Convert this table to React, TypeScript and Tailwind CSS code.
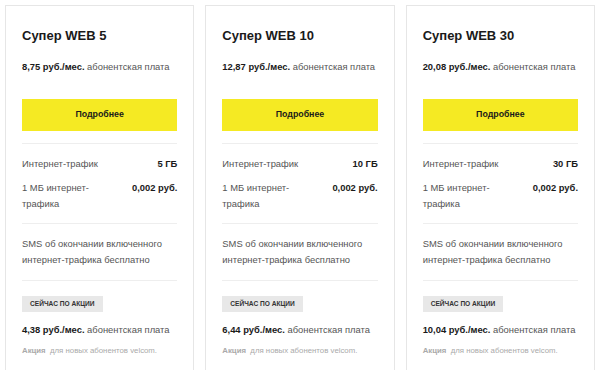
const plans = [
  { name: "Супер WEB 5", price: "8,75", traffic: "5 ГБ", promo: "4,38" },
  { name: "Супер WEB 10", price: "12,87", traffic: "10 ГБ", promo: "6,44" },
  { name: "Супер WEB 30", price: "20,08", traffic: "30 ГБ", promo: "10,04" },
];

function PlanCard({ name, price, traffic, promo }: { name: string; price: string; traffic: string; promo: string }) {
  return (
    <div className="h-[380px] border border-[#e6e6e6] bg-white px-4 pt-[22px]">
      <div className="text-[13px] font-bold leading-4 text-[#1a1a1a]">{name}</div>
      <div className="mt-[17px] text-[9.4px] leading-3 text-[#555]">
        <span className="font-bold text-[#1a1a1a]">{price} руб./мес.</span> абонентская плата
      </div>
      <a href="#" className="mt-[26px] flex h-8 items-center justify-center bg-[#f5ea23] text-[8.8px] font-bold text-[#1a1a1a]">
        Подробнее
      </a>
      <div className="mt-3 border-t border-[#eeeeee] pt-3 text-[9.4px] leading-4 text-[#555]">
        <div className="flex justify-between">
          <span>Интернет-трафик</span>
          <span className="font-bold text-[#1a1a1a]">{traffic}</span>
        </div>
        <div className="mt-2 flex justify-between">
          <span className="w-[74px]">1 МБ интернет-трафика</span>
          <span className="font-bold text-[#1a1a1a]">0,002 руб.</span>
        </div>
      </div>
      <div className="mt-[11px] border-t border-[#eeeeee] pt-[12px] text-[9.4px] leading-4 text-[#555]">
        SMS об окончании включенного интернет-трафика бесплатно
      </div>
      <div className="mt-3 border-t border-[#eeeeee] pt-[15px]">
        <div className="flex h-4 w-fit items-center bg-[#e8e8e8] px-2 text-[6.6px] font-bold uppercase text-[#333]">
          Сейчас по акции
        </div>
        <div className="mt-3 text-[9.4px] leading-3 text-[#555]">
          <span className="font-bold text-[#1a1a1a]">{promo} руб./мес.</span> абонентская плата
        </div>
        <div className="mt-[9px] text-[7.8px] leading-3 text-[#aaa]">
          <span className="font-bold">Акция</span>&nbsp; для новых абонентов velcom.
        </div>
      </div>
    </div>
  );
}

export default function App() {
  return (
    <div className="h-[370px] w-[600px] overflow-hidden bg-white px-[5px] pt-[5px] font-['Liberation_Sans',Arial,sans-serif]">
      <div className="grid grid-cols-3 gap-[11px]">
        {plans.map((p) => (
          <PlanCard key={p.name} {...p} />
        ))}
      </div>
    </div>
  );
}
